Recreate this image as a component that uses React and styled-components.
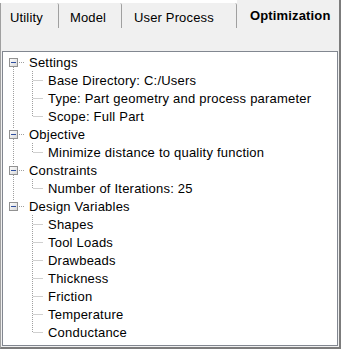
import styled, { createGlobalStyle } from 'styled-components';

const GlobalStyle = createGlobalStyle`
  html, body {
    margin: 0;
    padding: 0;
    background: #ffffff;
  }
  body {
    font-family: "Liberation Sans", Arial, sans-serif;
    font-size: 13px;
    color: #000000;
  }
`;

const Frame = styled.div`
  width: 341px;
  height: 349px;
  display: flex;
  flex-direction: column;
`;

const TabStrip = styled.div`
  display: flex;
  align-items: flex-end;
  height: 28px;
  flex-shrink: 0;
`;

const Tab = styled.div`
  box-sizing: border-box;
  width: ${({ $w }) => $w}px;
  height: ${({ $active }) => ($active ? 28 : 25)}px;
  padding-left: ${({ $pad }) => $pad}px;
  padding-top: ${({ $active }) => ($active ? 9 : 8)}px;
  background: #f0f0f0;
  border-left: ${({ $first }) => ($first ? '1px solid #a0a0a0' : 'none')};
  border-right: ${({ $active }) => ($active ? '2px solid #7c7c7c' : '1px solid #a0a0a0')};
  border-top-right-radius: ${({ $active }) => ($active ? 0 : 2)}px;
  font-weight: ${({ $active }) => ($active ? 'bold' : 'normal')};
  letter-spacing: 0.15px;
  white-space: nowrap;
  line-height: 14px;
`;

const Panel = styled.div`
  flex: 1;
  display: flex;
  flex-direction: column;
  padding: 23px 1px 1px 1px;
  background: #f0f0f0;
  border-left: 1px solid #a0a0a0;
  border-right: 2px solid #7c7c7c;
  border-bottom: 2px solid #7c7c7c;
`;

const Tree = styled.div`
  flex: 1;
  background: #ffffff;
  border: 1px solid #828790;
  padding-top: 1px;
  overflow: hidden;
`;

const Row = styled.div`
  display: flex;
  align-items: center;
  height: 18px;
  padding-left: 1px;
`;

const Label = styled.span`
  margin-left: 6px;
  white-space: nowrap;
  line-height: 18px;
  letter-spacing: 0.22px;
  padding-top: 1px;
`;

const Gutter = styled.svg`
  flex-shrink: 0;
  display: block;
  overflow: visible;
`;

const LINE = '#a0a0a0';

// one 19x18 cell of the tree connector lines
function Cell({ up, down, right, box }) {
  const cx = 9.5;
  const cy = 9;
  return (
    <Gutter width="19" height="18" viewBox="0 0 19 18">
      {up && (
        <line x1={cx} y1="0" x2={cx} y2={box ? 4 : cy} stroke={LINE} strokeDasharray="1 1" />
      )}
      {down && (
        <line x1={cx} y1={box ? 14 : cy + 1} x2={cx} y2="18" stroke={LINE} strokeDasharray="1 1" />
      )}
      {right && (
        <line x1={box ? 15 : cx + 1} y1={cy + 0.5} x2="20" y2={cy + 0.5} stroke={LINE} strokeDasharray="1 1" />
      )}
      {box && (
        <g>
          <defs>
            <linearGradient id="boxFill" x1="0" y1="0" x2="1" y2="1">
              <stop offset="0" stopColor="#ffffff" />
              <stop offset="1" stopColor="#d6d6d6" />
            </linearGradient>
          </defs>
          <rect x="5.5" y="5.5" width="8" height="8" fill="url(#boxFill)" stroke="#919191" />
          <line x1="7" y1="9.5" x2="12" y2="9.5" stroke="#2f4f9e" />
        </g>
      )}
    </Gutter>
  );
}

const tree = [
  {
    label: 'Settings',
    children: ['Base Directory: C:/Users', 'Type: Part geometry and process parameter', 'Scope: Full Part'],
  },
  { label: 'Objective', children: ['Minimize distance to quality function'] },
  { label: 'Constraints', children: ['Number of Iterations: 25'] },
  {
    label: 'Design Variables',
    children: ['Shapes', 'Tool Loads', 'Drawbeads', 'Thickness', 'Friction', 'Temperature', 'Conductance'],
  },
];

const tabs = [
  { label: 'Utility', w: 59, pad: 9, first: true },
  { label: 'Model', w: 63, pad: 11 },
  { label: 'User Process', w: 115, pad: 12 },
  { label: 'Optimization', w: 104, pad: 13, active: true },
];

export default function App() {
  const rows = [];
  tree.forEach((node, i) => {
    const lastRoot = i === tree.length - 1;
    rows.push(
      <Row key={node.label}>
        <Cell up={i > 0} down={!lastRoot} right box />
        <Label>{node.label}</Label>
      </Row>
    );
    node.children.forEach((child, j) => {
      const lastChild = j === node.children.length - 1;
      rows.push(
        <Row key={node.label + child}>
          <Cell up={!lastRoot} down={!lastRoot} />
          <Cell up down={!lastChild} right />
          <Label>{child}</Label>
        </Row>
      );
    });
  });

  return (
    <>
      <GlobalStyle />
      <Frame>
        <TabStrip>
          {tabs.map((t) => (
            <Tab key={t.label} $w={t.w} $pad={t.pad} $first={t.first} $active={t.active}>
              {t.label}
            </Tab>
          ))}
        </TabStrip>
        <Panel>
          <Tree>{rows}</Tree>
        </Panel>
      </Frame>
    </>
  );
}
